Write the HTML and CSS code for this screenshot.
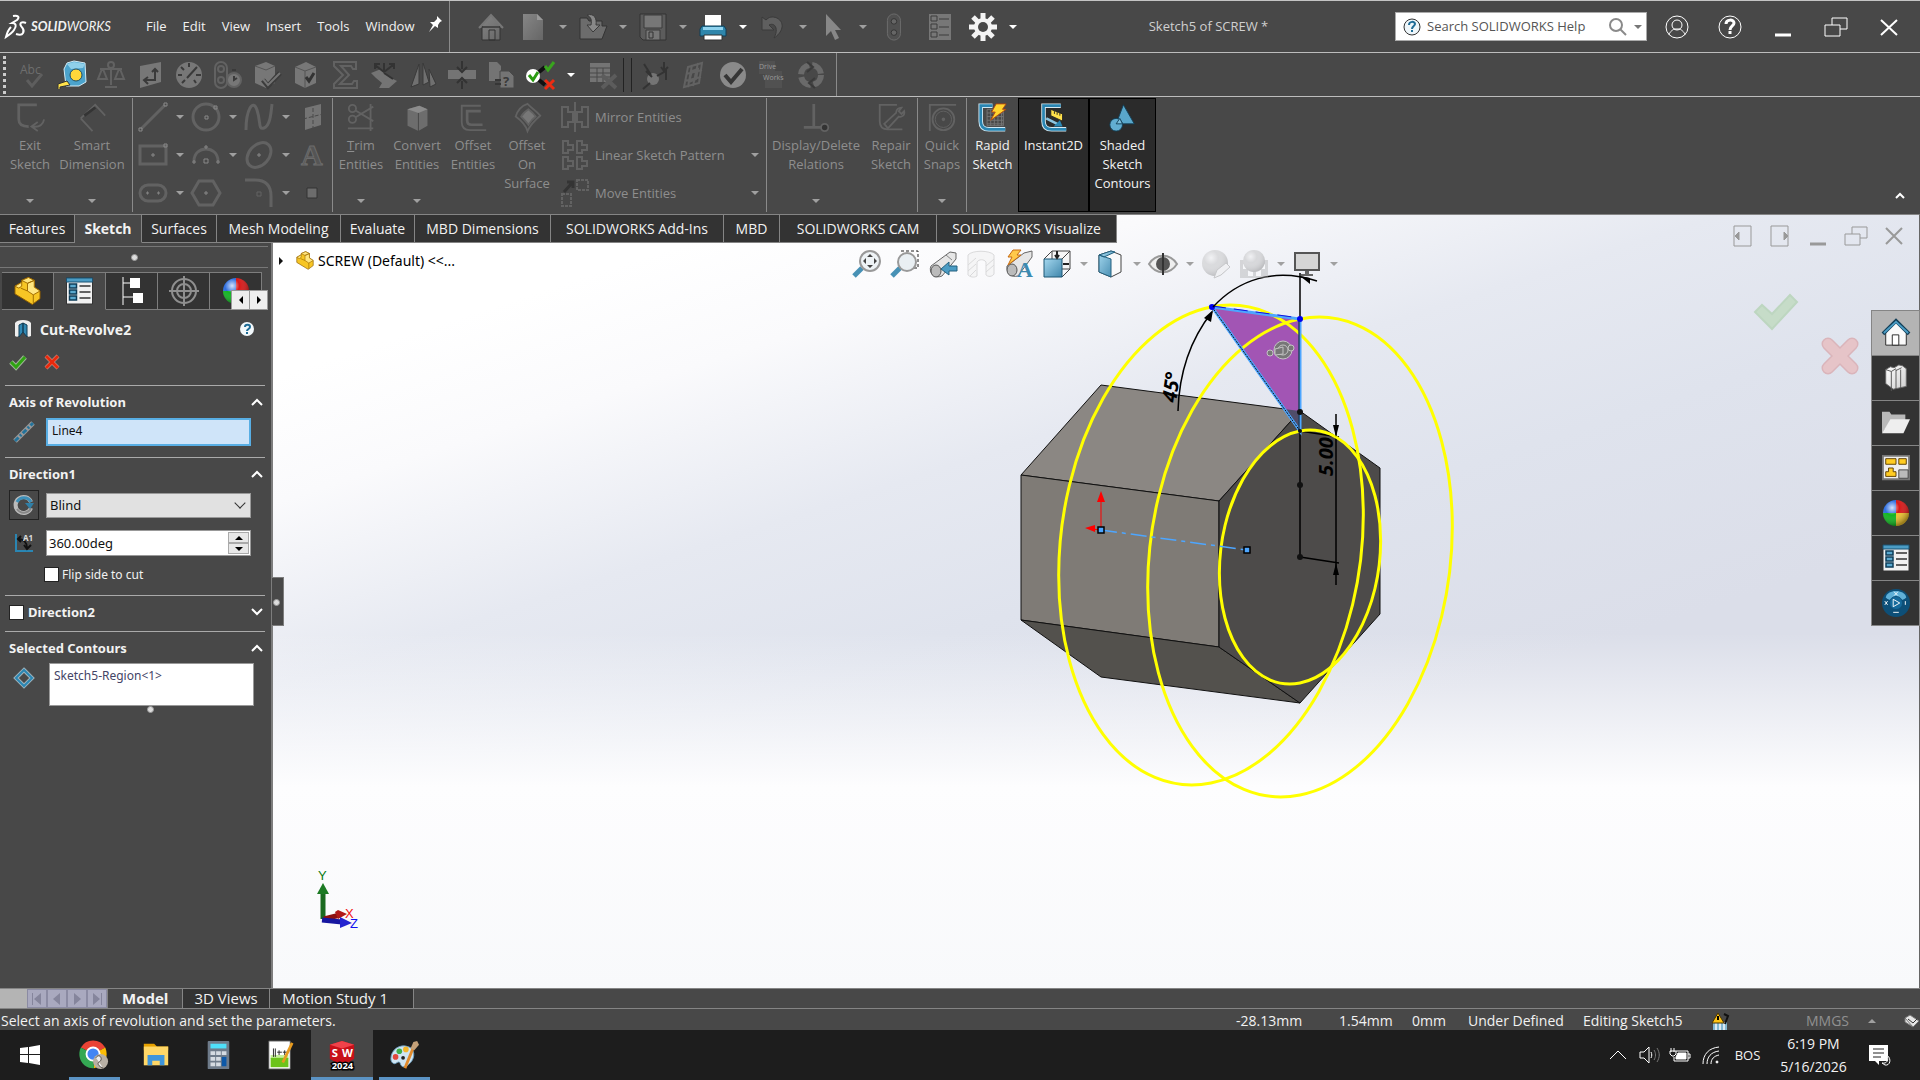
FILE: index.html
```html
<!DOCTYPE html>
<html lang="en">
<head>
  <meta charset="UTF-8" />
  <meta name="viewport" content="width=device-width, initial-scale=1.0" />
  <title>Sketch5 of SCREW *</title>
  <link rel="stylesheet" href="styles.css">
</head>
<body>
  <svg class="defs" aria-hidden="true">
    <defs>
      <linearGradient id="gBlue" x1="0" y1="0" x2="1" y2="1"><stop offset="0" stop-color="#a5d8ef"/><stop offset="1" stop-color="#3f86ab"/></linearGradient>
      <linearGradient id="gWhite" x1="0" y1="0" x2="1" y2="1"><stop offset="0" stop-color="#fff"/><stop offset="1" stop-color="#cfcfcf"/></linearGradient>
      <linearGradient id="gGrey" x1="0" y1="0" x2="1" y2="1"><stop offset="0" stop-color="#868686"/><stop offset="1" stop-color="#666"/></linearGradient>
      <radialGradient id="gShine" cx=".35" cy=".3" r=".7"><stop offset="0" stop-color="#fff" stop-opacity=".8"/><stop offset=".4" stop-color="#fff" stop-opacity="0"/><stop offset="1" stop-color="#000" stop-opacity=".35"/></radialGradient>
      <symbol id="part" viewBox="0 0 28 30">
        <path d="M1 10 8 6V4l7-3 6 3v7l6 4v8l-8 6L1 18z" fill="#f7c625" stroke="#8a5a00"/>
        <path d="M8 4l6 3 7-3-6-3zM14 7v8l6 4 7-4-6-4V4zM1 10l4 2 3-2V6z" fill="#ffe680" stroke="#a06c00"/>
        <path d="M20 19v9M14 15l-7-3" stroke="#a06c00" fill="none"/>
      </symbol>
      <symbol id="props" viewBox="0 0 28 28">
        <path d="M1 1h26v26H1z" fill="#f1f1f1" stroke="#333"/><path d="M1 1h26v4H1z" fill="#4b9cc4" stroke="#1b5273"/>
        <g fill="#5aa9cf" stroke="#0d3c58" stroke-width="1.5"><rect x="4" y="7" width="7" height="4"/><rect x="4" y="13" width="7" height="4"/><rect x="4" y="19" width="7" height="4"/></g>
        <path d="M14 9h11M14 15h11M14 21h11" stroke="#333" stroke-width="1.5"/>
      </symbol>
      <symbol id="ball" viewBox="0 0 28 28">
        <path d="M14 14H1A13 13 0 0 1 14 1z" fill="#2f6fe0"/><path d="M14 14V1a13 13 0 0 1 13 13z" fill="#d81818"/>
        <path d="M14 14H1a13 13 0 0 0 13 13z" fill="#12b422"/><path d="M14 14h13a13 13 0 0 1-13 13z" fill="#edc02c"/>
        <circle cx="14" cy="14" r="13" fill="url(#gShine)"/>
      </symbol>
    </defs>
  </svg>

  <header class="titlebar">
    <div class="brand">
      <svg width="22" height="26" viewBox="0 0 22 26" fill="none" stroke="#fff" stroke-width="2"><path d="M8 2c5-1 7 1 4 4L7 9c4 0 5 3 2 7-2 3-5 5-8 7 1-4 3-8 5-10"/><path d="M21 9c-4-2-7 0-5 3s4 4 2 7c-1 2-4 2-7 1"/></svg>
      <span><b>SOLID</b>WORKS</span>
    </div>
    <nav class="menus">
      <button>File</button><button>Edit</button><button>View</button><button>Insert</button><button>Tools</button><button>Window</button>
    </nav>
    <button class="pin" aria-label="Pin menu"><svg width="14" height="16" viewBox="0 0 14 16"><path d="M9 0l5 5-2 1-2 3v3L7 10l-6 6 4-7-3-3h4l3-3z" fill="#fff"/></svg></button>
    <div class="quick">
      <button class="tb home" aria-label="Home"><svg viewBox="0 0 28 28"><path d="M2 15 14 2l12 13M5 13v14h18V13" fill="url(#gGrey)" stroke="#333"/><path d="M2 15 14 2l12 13" fill="none" stroke="#777" stroke-width="2"/><path d="M12 17h6v10h-6z" fill="none" stroke="#333"/></svg></button>
      <button class="tb" aria-label="New"><svg viewBox="0 0 28 28"><path d="M4 1h14l6 6v20H4z" fill="url(#gGrey)"/><path d="M18 1v6h6" fill="#999"/></svg></button>
      <button class="drop" aria-label="New options"></button>
      <button class="tb" aria-label="Open"><svg viewBox="0 0 28 28"><path d="M1 26V5h7l2 3h13v5h5l-5 13z" fill="#6c6c6c" stroke="#333"/><path d="M8 2c7-2 10 3 9 10h4l-7 7-6-7h4c1-5 0-8-4-10z" fill="#888" stroke="#3a3a3a"/></svg></button>
      <button class="drop" aria-label="Open options"></button>
      <button class="tb" aria-label="Save"><svg viewBox="0 0 28 28"><path d="M1 1h26v26H4l-3-3z" fill="#5c5c5c" stroke="#333"/><path d="M5 2h18v13H5zM7 17h14v10H7z" fill="#777" stroke="#3a3a3a"/><path d="M10 19h4v6h-4z" fill="none" stroke="#333"/></svg></button>
      <button class="drop" aria-label="Save options"></button>
      <button class="tb" aria-label="Print"><svg viewBox="0 0 28 28"><path d="M6 2h16v12H6z" fill="#fff"/><path d="M3 13h22l2 3v7H1v-7z" fill="#2f86ab" stroke="#0f3f58"/><path d="M4 14h20v3H4z" fill="#8fd3ef"/><path d="M5 22h18v5H5z" fill="#fff" stroke="#333"/></svg></button>
      <button class="drop on" aria-label="Print options"></button>
      <button class="tb" aria-label="Undo"><svg viewBox="0 0 28 28"><path d="M3 4v13h12l-5-5c6-3 10 4 5 13 8-5 12-15 3-20-5-2-8-1-11 2z" fill="#5f5f5f" stroke="#3a3a3a"/></svg></button>
      <button class="drop" aria-label="Undo options"></button>
      <button class="tb" aria-label="Select"><svg viewBox="0 0 28 28"><path d="M7 1v22l5-5 4 9 4-2-4-8h6z" fill="#888"/></svg></button>
      <button class="drop" aria-label="Select options"></button>
      <button class="tb rebuild" aria-label="Rebuild"><svg viewBox="0 0 28 30"><rect x="8" y="1" width="14" height="28" rx="7" fill="#505050" stroke="#6e6e6e"/><circle cx="15" cy="9" r="3" fill="#666" stroke="#333"/><circle cx="15" cy="21" r="3" fill="#666" stroke="#333"/></svg></button>
      <button class="tb list" aria-label="File properties"><svg viewBox="0 0 28 28"><path d="M3 1h22v26H3z" fill="#777"/><path d="M5 3h6v5H5zM5 11h6v5H5zM5 19h6v5H5zM13 6h10M13 14h10M13 22h10" fill="none" stroke="#3c3c3c"/></svg></button>
      <button class="tb" aria-label="Options"><svg viewBox="0 0 28 28"><g stroke="#f4f4f4" stroke-width="5"><path d="M14 0v28M0 14h28M4 4l20 20M24 4 4 24"/></g><circle cx="14" cy="14" r="9" fill="#f4f4f4"/><circle cx="14" cy="14" r="5" fill="#484848"/></svg></button>
      <button class="drop on" aria-label="More options"></button>
    </div>
    <h1>Sketch5 of SCREW *</h1>
    <div class="search">
      <svg width="18" height="18" viewBox="0 0 18 18"><circle cx="9" cy="9" r="8" fill="#eef6fa" stroke="#333"/><path d="M6 7c0-4 6-4 6-1 0 2-3 2-3 5M9 12v2" fill="none" stroke="#1f6c96" stroke-width="2"/></svg>
      <input type="text" aria-label="Search help" placeholder="Search SOLIDWORKS Help">
      <svg width="18" height="18" viewBox="0 0 18 18" fill="none" stroke="#8a8a8a" stroke-width="2"><circle cx="7" cy="7" r="6"/><path d="M11 11l6 6"/></svg>
      <button class="drop grey" aria-label="Search options"></button>
    </div>
    <div class="window-buttons">
      <button aria-label="Account"><svg viewBox="0 0 26 26"><circle cx="13" cy="13" r="11"/><circle cx="13" cy="11" r="5"/><path d="M5 21c1-4 4-5 5-6h6c1 1 4 2 5 6"/></svg></button>
      <button aria-label="Help"><svg viewBox="0 0 26 26"><circle cx="13" cy="13" r="11"/><path d="M9 10c0-5 8-5 8-1 0 3-4 3-4 7M13 17v3" stroke-width="3"/></svg></button>
      <button aria-label="Minimize"><svg viewBox="0 0 26 26"><path d="M5 21h16" stroke-width="3"/></svg></button>
      <button aria-label="Restore"><svg viewBox="0 0 26 26"><path d="M2 11h15v11H2zM9 11V4h15v11h-7" /></svg></button>
      <button aria-label="Close"><svg viewBox="0 0 26 26"><path d="M5 6l16 15M21 6 5 21" stroke-width="2"/></svg></button>
    </div>
  </header>

  <div class="toolbar">
    <i class="grip"></i>
    <button aria-label="Spelling"><svg viewBox="0 0 28 28"><text x="1" y="13" font-size="12" fill="#6e6e6e">Abc</text><path d="M8 19l5 6 10-12" fill="none" stroke="#5e5e5e" stroke-width="3"/></svg></button>
    <button aria-label="Measure"><svg viewBox="0 0 28 28"><path d="M9 2l7-2 11 2 1 19-7 4H8L6 8z" fill="#4ba3cc" stroke="#d5ecf6"/><path d="M9 3l7-2 11 2-2 4-12 1z" fill="#8fd0ea"/><circle cx="18" cy="14" r="6" fill="#ffd83a" stroke="#1d4d68"/><path d="M0 28v-5l9-3 3 4-10 2v2" fill="#ffe24a" stroke="#333"/></svg></button>
    <button aria-label="Mass properties"><svg viewBox="0 0 28 28" class="ln"><circle cx="14" cy="4" r="3"/><path d="M14 7v17M3 8h22M5 8 1 18h9L6 8M22 8l-4 10h9L23 8M8 26h12"/></svg></button>
    <button aria-label="Section properties"><svg viewBox="0 0 28 28"><path d="M4 5l21-4v20L4 27z" fill="#777"/><path d="M9 19h10V9M12 16l-4 3 4 4M16 11l3-3 3 3" fill="none" stroke="#3a3a3a" stroke-width="2"/></svg></button>
    <button aria-label="Sensor"><svg viewBox="0 0 28 28"><circle cx="14" cy="14" r="13" fill="#777"/><path d="M12 17 22 6M14 2v4M3 14h4M21 14h5M6 6l3 3M7 22l3-3M21 22l-2-3" stroke="#3a3a3a" stroke-width="2"/></svg></button>
    <button aria-label="Performance evaluation"><svg viewBox="0 0 28 28" class="ln"><rect x="1" y="1" width="12" height="26" rx="6"/><circle cx="7" cy="8" r="3"/><circle cx="7" cy="19" r="3"/><circle cx="20" cy="19" r="7" fill="#777"/><path d="M20 15v4l3-2M18 9h4" stroke="#3a3a3a" stroke-width="2"/></svg></button>
    <button aria-label="Check"><svg viewBox="0 0 28 28"><path d="M2 5l11-4 9 4v17l-9 5-11-5z" fill="#777"/><path d="M2 5l11 4 9-4" fill="none" stroke="#555"/><path d="M10 19l5 6L27 12" fill="none" stroke="#3c3c3c" stroke-width="5"/><path d="M10 18l5 6L27 12" fill="none" stroke="#747474" stroke-width="2"/></svg></button>
    <button aria-label="Import diagnostics"><svg viewBox="0 0 28 28"><path d="M3 6l11-5 10 5v16l-11 5-10-5z" fill="#777"/><path d="M3 6l10 4 11-4M13 10v17" fill="none" stroke="#555"/><path d="M14 16l3 4 5-8" fill="none" stroke="#333" stroke-width="3"/></svg></button>
    <button aria-label="Equations"><svg viewBox="0 0 28 28" class="ln"><path d="M3 1h22v7h-3l-2-3H10l8 9-9 9h12l2-3h3v7H3v-4l9-9-9-9z"/></svg></button>
    <button aria-label="Geometry analysis"><svg viewBox="0 0 28 28"><path d="M1 12l10-4 8 8 8 4-8 7H9l3-5-6-5z" fill="#747474"/><path d="M5 4l9 7 9-7M14 2v9M14 12l9 6M5 8V3h5M19 3h5v5" fill="none" stroke="#333" stroke-width="2"/></svg></button>
    <button aria-label="Draft analysis"><svg viewBox="0 0 28 28"><path d="M2 26 10 3v20zM14 2v22l6-3zM20 8l7 15-6 3z" fill="#707070" stroke="#3a3a3a"/></svg></button>
    <button aria-label="Thickness analysis"><svg viewBox="0 0 28 28"><path d="M0 9h28v9H0z" fill="#747474"/><path d="M14 0v8M9 6l5 5 5-5M14 28v-8M9 22l5-5 5 5" fill="none" stroke="#333" stroke-width="2"/></svg></button>
    <button aria-label="Compare documents"><svg viewBox="0 0 28 28"><path d="M2 1h8l4 4v15H2z" fill="#747474"/><path d="M13 10h9l5 5v12H13z" fill="#747474" stroke="#484848"/><text x="16" y="25" font-size="13" font-weight="bold" fill="#3a3a3a">?</text><path d="M8 19h6M8 23h6" stroke="#363636" stroke-width="2"/></svg></button>
    <button aria-label="Check active document"><svg viewBox="0 0 28 28"><circle cx="7" cy="15" r="7" fill="#fff"/><path d="M3 14l4 5 5-8" fill="none" stroke="#2b9a12" stroke-width="3"/><path d="M13 11l6-5M13 19l6 5" stroke="#111" stroke-width="4"/><path d="M19 5l3 4 6-8" fill="none" stroke="#39a41e" stroke-width="3"/><path d="M19 19l9 9M28 19l-9 9" stroke="#ec2c12" stroke-width="3"/></svg></button>
    <button class="drop on" aria-label="Check options"></button>
    <button aria-label="Design table"><svg viewBox="0 0 28 28"><path d="M1 2h20v19H1z" fill="#747474"/><path d="M1 7h20M1 12h20M1 16h20M8 7v14M14 7v14" stroke="#484848"/><path d="M13 14l14 13M27 14 13 27" stroke="#5c5c5c" stroke-width="4"/></svg></button>
    <i class="rails"></i>
    <button aria-label="Simulation"><svg viewBox="0 0 28 28"><circle cx="12" cy="18" r="6" fill="#747474"/><path d="M3 3l7 11M5 10l6 6M2 28l7-6M16 15l9-5v9M23 1v8M20 6l3 4 4-4" fill="none" stroke="#333" stroke-width="2"/></svg></button>
    <button aria-label="Flow simulation"><svg viewBox="0 0 28 28" class="ln"><path d="M8 6l14-4-3 20-15 4zM12 10l6-2-2 10-7 3zM12 4 8 26M18 2l-5 23M6 13l16-4M5 20l16-4"/></svg></button>
    <button aria-label="Costing"><svg viewBox="0 0 28 28"><circle cx="14" cy="14" r="13" fill="#8a8a8a"/><path d="M6 14l6 7L23 8" fill="none" stroke="#363636" stroke-width="4"/></svg></button>
    <button aria-label="DriveWorks"><svg viewBox="0 0 28 28"><path d="M1 0h16v13H1zM7 10h17v17H7z" fill="#515151"/><text x="1" y="8" font-size="7" fill="#999">Drive</text><text x="5" y="19" font-size="7" fill="#999">Works</text></svg></button>
    <button aria-label="Update"><svg viewBox="0 0 28 28"><circle cx="14" cy="14" r="10" fill="none" stroke="#6a6a6a" stroke-width="6" stroke-dasharray="13 3"/><path d="M10 1l6 5-6 5M18 27l-6-5 6-5" fill="none" stroke="#3a3a3a" stroke-width="2"/></svg></button>
    <i class="end"></i>
  </div>

  <div class="ribbon">
    <div class="group pad">
      <button class="cmd w60 dim"><svg viewBox="0 0 32 32" class="ln"><path d="M23 2H3v16c0 6 4 8 11 8" stroke-width="3"/><path d="M18 26c8 1 12-3 13-8M24 21l-7 5 7 5"/></svg>Exit<br>Sketch<i></i></button>
      <button class="cmd w64 dim"><svg viewBox="0 0 32 32" class="ln"><path d="M3 17 19 2l11 12M3 17l13 14"/><path d="M7 14l12-9" stroke="#343434" stroke-width="3"/></svg>Smart<br>Dimension<i></i></button>
    </div>
    <div class="group shapes">
      <button aria-label="Line"><svg viewBox="0 0 30 30" class="ln"><path d="M3 27 27 3" stroke-width="3"/><path d="M1 26h3v3H1zM26 1h3v3h-3z" stroke="#888" stroke-width="1"/></svg></button><button class="drop" aria-label="Line options"></button>
      <button aria-label="Circle"><svg viewBox="0 0 30 30" class="ln"><circle cx="15" cy="15" r="13" stroke-width="3"/><path d="M14 14h3v3h-3zM23 4h3v3h-3z" stroke="#888" stroke-width="1"/></svg></button><button class="drop" aria-label="Circle options"></button>
      <button aria-label="Spline"><svg viewBox="0 0 30 30" class="ln"><path d="M2 28C2 8 9-4 13 8s1 20 7 18 7-14 8-24" stroke-width="3"/></svg></button><button class="drop" aria-label="Spline options"></button>
      <button aria-label="Plane"><svg viewBox="0 0 30 30"><path d="M8 6l16-4v21L8 28z" fill="#747474"/><path d="M16 0v30M6 17l20-5" stroke="#484848" stroke-dasharray="4 2"/></svg></button>
      <button aria-label="Rectangle"><svg viewBox="0 0 30 30" class="ln"><path d="M2 6h26v18H2z" stroke-width="3"/><path d="M14 14h2v2h-2zM26 4h3v3h-3z" stroke="#888" stroke-width="1"/></svg></button><button class="drop" aria-label="Rectangle options"></button>
      <button aria-label="Arc"><svg viewBox="0 0 30 30" class="ln"><path d="M3 21C3 5 27 5 27 21" stroke-width="3"/><path d="M13 19h4v4h-4zM2 21h2v2H2zM26 21h2v2h-2zM14 6h2v2h-2z" stroke="#888" stroke-width="1"/></svg></button><button class="drop" aria-label="Arc options"></button>
      <button aria-label="Ellipse"><svg viewBox="0 0 30 30" class="ln"><ellipse cx="15" cy="15" rx="14" ry="10" transform="rotate(-48 15 15)" stroke-width="3"/><path d="M14 14h2v2h-2z" stroke="#888" stroke-width="1"/></svg></button><button class="drop" aria-label="Ellipse options"></button>
      <button aria-label="Text"><svg viewBox="0 0 30 30"><text x="4" y="25" font-family="Liberation Serif" font-size="30" font-weight="bold" fill="#555" stroke="#6c6c6c">A</text></svg></button>
      <button aria-label="Slot"><svg viewBox="0 0 30 30" class="ln"><rect x="2" y="7" width="26" height="16" rx="8" stroke-width="3"/><path d="M9 14h1v2H9zM20 14h1v2h-1z" stroke="#888" stroke-width="1"/></svg></button><button class="drop" aria-label="Slot options"></button>
      <button aria-label="Polygon"><svg viewBox="0 0 30 30" class="ln"><path d="M8 3h14l7 12-7 12H8L1 15z" stroke-width="3"/><path d="M14 14h2v2h-2z" stroke="#888" stroke-width="1"/></svg></button><span></span>
      <button aria-label="Fillet"><svg viewBox="0 0 30 30" class="ln"><path d="M1 2h10c11 0 16 6 16 16v11" stroke-width="3"/><path d="M13 14h4v4h-4z" stroke-width="1"/></svg></button><button class="drop" aria-label="Fillet options"></button>
      <button aria-label="Point"><svg viewBox="0 0 30 30"><path d="M10 10h10v10H10z" fill="#6c6c6c" stroke="#333"/></svg></button>
    </div>
    <div class="group">
      <button class="cmd w56 dim"><svg viewBox="0 0 32 32" class="ln"><circle cx="6" cy="6" r="4"/><circle cx="6" cy="18" r="4"/><path d="M9 8l20 12M9 16 29 4M1 28h28M26 1v30"/></svg><span><u>T</u>rim</span>Entities<i></i></button>
      <button class="cmd w56 dim"><svg viewBox="0 0 32 32"><path d="M5 7l13-4 9 4v18l-10 6-12-6z" fill="#6d6d6d"/><path d="M5 7l12 4 10-4-9-4z" fill="#8c8c8c"/><path d="M17 11v20" stroke="#444"/></svg>Convert<br>Entities<i></i></button>
      <button class="cmd w56 dim"><svg viewBox="0 0 32 32" class="ln"><path d="M24 3H3v18c0 6 3 9 9 9h18"/><path d="M24 9H9v10c0 3 2 5 5 5h12" stroke-width="3"/></svg>Offset<br>Entities</button>
      <button class="cmd w52 dim"><svg viewBox="0 0 32 32" class="ln"><path d="M3 15C5 8 10 3 16 1c6 6 10 8 14 13-6 5-11 10-14 17-2-6-6-11-13-16z"/><path d="M9 15c2-4 5-6 8-8 4 3 6 5 8 8-4 3-6 6-8 9-2-3-5-6-8-9z" fill="#777"/></svg>Offset<br>On<br>Surface</button>
      <div class="rows">
        <button class="row"><svg viewBox="0 0 30 30" class="ln"><path d="M2 5h6v5h5v10H8v5H2zM28 5h-6v5h-5v10h5v5h6zM15 0v30"/></svg>Mirror Entities</button>
        <button class="row"><svg viewBox="0 0 30 30" class="ln"><path d="M3 1h5v4h5v5H8v3H3zM17 1h5v4h5v5h-5v3h-5zM3 17h5v4h5v5H8v3H3zM17 17h5v4h5v5h-5v3h-5z"/></svg>Linear Sketch Pattern<i></i></button>
        <button class="row"><svg viewBox="0 0 30 30" class="ln"><path d="M2 16h9v12H2zM17 2h11v10H17z" stroke-dasharray="3 1"/><path d="M4 14l8-9M7 4h6v6" stroke="#343434" stroke-width="3"/></svg>Move Entities<i></i></button>
      </div>
    </div>
    <div class="group">
      <button class="cmd w98 dim"><svg viewBox="0 0 32 32" class="ln"><path d="M13 1v26M2 27h20" stroke-width="3"/><circle cx="25" cy="27" r="4" fill="#333"/></svg>Display/Delete<br>Relations<i></i></button>
      <button class="cmd w52 dim"><svg viewBox="0 0 32 32" class="ln"><path d="M22 2H3v18c0 6 3 9 9 9h16"/><path d="M8 23l13-12c0-4 3-6 6-6l-3 4 3 3 3-3c1 5-3 7-6 6L12 28z"/></svg>Repair<br>Sketch</button>
    </div>
    <div class="group">
      <button class="cmd w48 dim"><svg viewBox="0 0 32 32" class="ln"><path d="M2 31V2h29"/><circle cx="17" cy="18" r="12"/><circle cx="17" cy="18" r="9" stroke-width="1"/><circle cx="17" cy="18" r="1"/></svg>Quick<br>Snaps<i></i></button>
    </div>
    <div class="group open">
      <button class="cmd w51"><svg viewBox="0 0 32 32"><path d="M10 7h18v18H10zM14 7v18M18 7v18M22 7v18M26 7v18M10 11h18M10 15h18M10 19h18M10 23h18" fill="none" stroke="#777"/><path d="M16 3H3v17c0 6 3 9 9 9h18" fill="none" stroke="#cfe8f4" stroke-width="5"/><path d="M16 3H3v17c0 6 3 9 9 9h18" fill="none" stroke="#2a86b3" stroke-width="3"/><path d="M20 1h11l-4 6h4L14 19l5-9h-4z" fill="#ffd52e" stroke="#b4470b"/></svg>Rapid<br>Sketch</button>
      <button class="cmd w71 active"><svg viewBox="0 0 32 32"><path d="M24 3H5v17c0 6 3 9 9 9h16" fill="none" stroke="#d9e9f0" stroke-width="5"/><path d="M24 3H5v17c0 6 3 9 9 9h16" fill="none" stroke="#2a86b3" stroke-width="3"/><path d="M13 7l13 5v8l-13-6z" fill="#ffe14a" stroke="#222"/><path d="M17 9v3M20 10v3M23 11v3" stroke="#222"/><path d="M8 17l12 6" stroke="#8cc6e2" stroke-width="3"/><path d="M16 26h10l-3-7z" fill="#2a86b3"/></svg>Instant2D</button>
      <button class="cmd w67 active"><svg viewBox="0 0 32 32"><path d="M17 2l12 21H9z" fill="#59a7cb" stroke="#123e55"/><circle cx="9" cy="24" r="7" fill="#62aed1" stroke="#123e55"/><path d="M13 17l3 6H9z" fill="#7cc0de" stroke="#123e55"/></svg>Shaded<br>Sketch<br>Contours</button>
    </div>
    <button class="collapse" aria-label="Collapse ribbon"><svg width="10" height="8" viewBox="0 0 10 8" fill="none" stroke="#fff" stroke-width="2"><path d="M1 6l4-4 4 4"/></svg></button>
  </div>

  <main class="workspace">
    <nav class="tabs">
      <button>Features</button><button class="current">Sketch</button><button>Surfaces</button><button>Mesh Modeling</button><button>Evaluate</button><button>MBD Dimensions</button><button>SOLIDWORKS Add-Ins</button><button>MBD</button><button>SOLIDWORKS CAM</button><button>SOLIDWORKS Visualize</button>
    </nav>

    <aside class="panel">
      <div class="panel-grip"><i class="knob"></i></div>
      <div class="panel-tabs">
        <button aria-label="Feature tree"><svg width="27" height="30"><use href="#part"/></svg></button>
        <button class="current" aria-label="Property manager"><svg width="29" height="28"><use href="#props"/></svg></button>
        <button aria-label="Configurations"><svg width="24" height="28" viewBox="0 0 24 28"><path d="M3 0v28M3 6h8M3 20h10" stroke="#fff" fill="none"/><path d="M10 1h10v10H10zM13 16h10v10H13z" fill="#fff"/></svg></button>
        <button aria-label="DimXpert"><svg width="30" height="30" viewBox="0 0 30 30" fill="none" stroke="#8f8f8f" stroke-width="2"><circle cx="15" cy="15" r="12"/><circle cx="15" cy="15" r="7"/><path d="M15 0v30M0 15h30"/></svg></button>
        <button aria-label="Display manager"><svg width="28" height="28"><use href="#ball"/></svg></button>
        <div class="scroller"><button aria-label="Scroll left"></button><button class="right" aria-label="Scroll right"></button></div>
      </div>

      <div class="feature">
        <svg width="18" height="18" viewBox="0 0 18 18"><path d="M1 3c2-4 14-4 16 0v13c-2 1-3 1-4 0V8L9 4 5 8v8c-1 1-3 1-4 0z" fill="#eee"/><path d="M5 5l4-2v9l-4 5zM9 3l4 2v12l-4-5z" fill="#3188b3" stroke="#123c54"/></svg>
        <h2>Cut-Revolve2</h2>
        <button aria-label="Help"><svg width="14" height="14" viewBox="0 0 14 14"><circle cx="7" cy="7" r="7" fill="#f2f8fb"/><path d="M5 5c0-3 5-3 5 0 0 2-3 2-3 4M7 10v2" fill="none" stroke="#1f6c96" stroke-width="2"/></svg></button>
      </div>
      <div class="confirm">
        <button aria-label="OK"><svg width="16" height="14" viewBox="0 0 16 14" fill="none"><path d="M1 7l5 5L15 2" stroke="#9fb597" stroke-width="5"/><path d="M1 7l5 5L15 2" stroke="#2fa312" stroke-width="3"/></svg></button>
        <button aria-label="Cancel"><svg width="14" height="14" viewBox="0 0 14 14"><path d="M1 1l12 12M13 1 1 13" stroke="#c99a92" stroke-width="4"/><path d="M1 1l12 12M13 1 1 13" stroke="#e8290c" stroke-width="3"/></svg></button>
      </div>

      <section class="axis">
        <header><h3><label for="axis">Axis of Revolution</label></h3><svg class="caret" viewBox="0 0 12 8"><path d="M1 7l5-5 5 5"/></svg></header>
        <div class="field">
          <span class="glyph"><svg width="20" height="20" viewBox="0 0 20 20"><path d="M1 19 19 1" stroke="#999" stroke-width="5"/><path d="M1 19 19 1" stroke="#23739b" stroke-width="3" stroke-dasharray="5 2 2 2"/></svg></span>
          <input id="axis" class="picked" type="text" value="Line4">
        </div>
      </section>

      <section class="dir1">
        <header><h3>Direction1</h3><svg class="caret" viewBox="0 0 12 8"><path d="M1 7l5-5 5 5"/></svg></header>
        <div class="field combo">
          <button class="glyph boxed" aria-label="Reverse direction"><svg width="20" height="20" viewBox="0 0 20 20" fill="none"><path d="M17 13a8 8 0 1 1 0-6" stroke="#bbb" stroke-width="4"/><path d="M17 13a8 8 0 0 1-14 1" stroke="#888" stroke-width="2"/><path d="M3 7a8 8 0 0 1 14 0" stroke="#3d8fb8" stroke-width="3"/><path d="M11 8h9l-4 6z" fill="#2f7fa7"/></svg></button>
          <select aria-label="End condition"><option>Blind</option></select>
        </div>
        <div class="field angle">
          <span class="glyph"><svg width="20" height="20" viewBox="0 0 20 20"><path d="M2 1v17h17" stroke="#2a86b3" stroke-width="2" fill="none"/><path d="M4 6c6 0 9 4 9 9M7 3L4 6l3 3M10 12l3 4 4-4" stroke="#111" fill="none" stroke-width="2"/><text x="9" y="8" font-size="8" font-weight="bold" fill="#ddd">A1</text></svg></span>
          <div class="spin"><input type="text" aria-label="Angle" value="360.00deg"><div><button aria-label="Increase"></button><button class="down" aria-label="Decrease"></button></div></div>
        </div>
        <label class="check flip"><input type="checkbox">Flip side to cut</label>
      </section>

      <section class="dir2">
        <header><label class="check"><input type="checkbox"><b>Direction2</b></label><svg class="caret" viewBox="0 0 12 8"><path d="M1 1l5 5 5-5"/></svg></header>
      </section>

      <section class="contours">
        <header><h3><label for="contours">Selected Contours</label></h3><svg class="caret" viewBox="0 0 12 8"><path d="M1 7l5-5 5 5"/></svg></header>
        <div class="field">
          <span class="glyph"><svg width="20" height="20" viewBox="0 0 20 20" fill="none"><path d="M10 2l8 8-8 8-8-8z" stroke="#9db3bd" stroke-width="4"/><path d="M10 2l8 8-8 8-8-8z" stroke="#2a86b3" stroke-width="2"/></svg></span>
          <textarea id="contours" readonly>Sketch5-Region&lt;1&gt;</textarea>
        </div>
        <i class="knob"></i>
      </section>
      <i class="handle"><i class="knob"></i></i>
    </aside>

    <div class="canvas">
      <svg class="scene" viewBox="273 243 1646 745" preserveAspectRatio="xMidYMid meet">
        <!-- hex body -->
        <g stroke="#111" stroke-linejoin="round">
          <path d="M1101 385 1300 411 1219 501 1021 475z" fill="#8b8783"/>
          <path d="M1021 475 1219 501V647L1021 620z" fill="#7f7b76"/>
          <path d="M1021 620 1219 647 1300 703 1101 677z" fill="#53514d"/>
          <path d="M1300 411 1380 468V614L1300 703 1219 647V501z" fill="#4d4b4a"/>
        </g>
        <!-- cut profile -->
        <path d="M1212 307 1300 319V431z" fill="#a255b4"/>
        <path d="M1284 409l16 2v20z" fill="#504d69"/>
        <path d="M1300 273V557M1300 557l39 6M1300 431l39 6M1336 414V585" stroke="#000" stroke-width="1.5"/>
        <!-- swept edges -->
        <g fill="none" stroke="#ff0" stroke-width="3">
          <circle r="238" transform="matrix(.64 -.127 0 1 1211 545)" vector-effect="non-scaling-stroke"/>
          <circle r="238" transform="matrix(.64 -.127 0 1 1300 557)" vector-effect="non-scaling-stroke"/>
          <circle r="126" transform="matrix(.64 -.127 0 1 1300 557)" vector-effect="non-scaling-stroke"/>
        </g>
        <path d="M1212 307 1300 319V431z" fill="none" stroke="#4da6ff" stroke-width="3"/>
        <path d="M1212 307 1300 431" stroke="#111" stroke-dasharray="2 1"/>
        <path d="M1212 306l88 12" stroke="#11d" stroke-dasharray="14 8"/>
        <path d="M1299 319v112" stroke="#111"/>
        <g fill="#00e"><circle cx="1212" cy="307" r="3"/><circle cx="1300" cy="319" r="3"/></g>
        <g fill="#111"><circle cx="1300" cy="412" r="3"/><circle cx="1300" cy="431" r="2"/><circle cx="1300" cy="485" r="3"/><circle cx="1300" cy="557" r="3"/></g>
        <g fill="#777" stroke="#c4c4c4"><circle cx="1283" cy="350" r="9"/><circle cx="1291" cy="348" r="3"/><circle cx="1283" cy="350" r="5"/><path d="M1275 349l8-2v7l-8 1z"/><circle cx="1270" cy="353" r="3"/></g>
        <!-- dimensions -->
        <path d="M1178 411C1179 375 1190 340 1212 312M1213 307C1238 280 1274 267 1317 281" fill="none" stroke="#000" stroke-width="1.5"/>
        <path d="M1213 310l-2 12-7-4zM1300 276l10 8v-6zM1336 437l-3-12h6zM1336 563l-3 12h6z"/>
        <text class="dim-text" transform="translate(1176 403) rotate(-82)">45°</text>
        <text class="dim-text" transform="translate(1333 476) rotate(-90)">5.00</text>
        <!-- origin and axis -->
        <path d="M1101 530V500M1101 530l-10-1" stroke="red"/>
        <path d="M1101 491l-4 11h8zM1085 528l10-3v7z" fill="red"/>
        <path d="M1101 530l146 20" stroke="#4da6ff" stroke-width="1.5" stroke-dasharray="16 5 4 5"/>
        <g fill="#4da6ff" stroke="#000" stroke-width="1.5"><path d="M1098 527h6v6h-6zM1244 547h6v6h-6z"/></g>
        <!-- triad -->
        <path d="M323 919V893" stroke="#1a6a20" stroke-width="5"/><path d="M323 883l-6 11h12z" fill="#1c7a24"/>
        <path d="M324 919l16-4" stroke="#8d1010" stroke-width="5"/><path d="M335 912l3-2 9 4-9 5z" fill="#b01818"/>
        <path d="M322 920l20 2" stroke="#1616a0" stroke-width="5"/><path d="M340 917l12 6-12 5z" fill="#2424d0"/>
        <g class="axis-text"><text x="318" y="880" fill="#0a7a14">Y</text><text x="345" y="918" fill="#f01010">X</text><text x="350" y="928" fill="#1010f0">Z</text></g>
      </svg>

      <div class="tree-node">
        <button aria-label="Expand tree"></button>
        <svg width="18" height="19"><use href="#part"/></svg>
        <span>SCREW (Default) &lt;&lt;...</span>
      </div>

      <div class="hud">
        <button aria-label="Zoom to fit"><svg viewBox="0 0 28 28"><path d="M1 26l8-8" stroke="#4791b5" stroke-width="5"/><circle cx="17" cy="11" r="10" fill="#eef3f6" stroke="#999" stroke-width="2"/><path d="M17 4l3 3h-6zM17 18l3-3h-6zM10 11l3-3v6zM24 11l-3-3v6z" fill="#444"/></svg></button>
        <button aria-label="Zoom to area"><svg viewBox="0 0 28 28"><path d="M1 26l8-8" stroke="#4791b5" stroke-width="5"/><path d="M10 1h17v17h-5" fill="none" stroke="#222" stroke-dasharray="3 2"/><circle cx="16" cy="12" r="9" fill="#e9eff3" stroke="#999" stroke-width="2"/></svg></button>
        <button aria-label="Previous view"><svg viewBox="0 0 28 28"><path d="M2 16 21 2l6 1v6L13 26c-7 3-14-3-11-10z" fill="#e6e6e6" stroke="#666"/><path d="M17 5l6 5" stroke="#888"/><ellipse cx="7" cy="21" rx="5" ry="6" fill="#bbb" stroke="#555"/><path d="M28 16h-8v-4l-8 7 8 6v-4h8z" fill="#4b9cc4" stroke="#24617f"/></svg></button>
        <button class="faint" aria-label="Section view"><svg viewBox="0 0 28 28"><path d="M1 5c4-5 22-5 26 0v19c-2 3-6 3-8 1V12c-2-3-7-3-9 0v14c-3 2-7 1-9-1z" fill="#eee" stroke="#aaa"/><path d="M1 15l8-7M1 21l8-7M3 26l6-6M19 16l8-7M19 22l8-7" stroke="#aaa"/></svg></button>
        <button aria-label="Dynamic annotation views"><svg viewBox="0 0 28 28"><path d="M2 16 19 3l8-2v6L13 26c-7 2-12-4-11-10z" fill="#e6e6e6" stroke="#666"/><ellipse cx="7" cy="20" rx="5" ry="6" fill="#bbb" stroke="#555"/><path d="M8 0h8l-4 5h4L3 15l4-8H3z" fill="#ffc94a" stroke="#c76a12"/><text x="12" y="27" font-family="Liberation Serif" font-size="22" font-weight="bold" fill="#3d8ab0">A</text></svg></button>
        <button aria-label="View orientation"><svg viewBox="0 0 28 28"><path d="M9 1h18v18H9zM1 9l8-8M19 9l8-8M19 27l8-8" fill="#f5f5f5" stroke="#444"/><path d="M1 9h18v18H1z" fill="url(#gBlue)" stroke="#1d5674"/><path d="M14 1v6M26 14h-6M12 5l2 3 2-3" stroke="#222" stroke-width="2" fill="none"/></svg></button>
        <button class="drop" aria-label="Orientation options"></button>
        <button aria-label="Display style"><svg viewBox="0 0 28 28"><path d="M3 5l12-4 10 4v17l-10 5-12-5z" fill="#fafafa" stroke="#444"/><path d="M3 5l12 4v18L3 22zM3 5l12-4 4 1L8 7z" fill="url(#gBlue)" stroke="#24617f"/></svg></button>
        <button class="drop" aria-label="Display options"></button>
        <button aria-label="Hide or show"><svg viewBox="0 0 28 28"><path d="M0 14C7 3 21 3 28 14 21 25 7 25 0 14z" fill="#eee" stroke="#999" stroke-width="2"/><circle cx="14" cy="14" r="7" fill="#555"/><path d="M14 3v22" stroke="#333" stroke-width="2"/></svg></button>
        <button class="drop" aria-label="Visibility options"></button>
        <button class="faint" aria-label="Edit appearance"><svg viewBox="0 0 28 28"><circle cx="13" cy="13" r="13" fill="#b5b5b5"/><circle cx="13" cy="13" r="13" fill="url(#gShine)"/><path d="M12 28l3-8 9-7 4 4-9 8z" fill="#eee" stroke="#888"/></svg></button>
        <button class="faint" aria-label="Apply scene"><svg viewBox="0 0 28 28"><path d="M0 10h28v18H0z" fill="#aaa"/><path d="M3 14h5v5H3zM20 14h5v5h-5zM8 20h5v6H8zM16 20h5v6h-5z" fill="#fff"/><circle cx="14" cy="11" r="11" fill="#b0b0b0"/><circle cx="14" cy="11" r="11" fill="url(#gShine)"/></svg></button>
        <button class="drop" aria-label="Scene options"></button>
        <button aria-label="View settings"><svg viewBox="0 0 28 28"><path d="M2 3h24v17H2z" fill="#d5d5d5" stroke="#555" stroke-width="2"/><path d="M12 21h4v3h4v2H8v-2h4z" fill="#666"/></svg></button>
        <button class="drop" aria-label="View options"></button>
      </div>

      <div class="corner">
        <div class="doc-buttons">
          <button aria-label="Dock left"><svg viewBox="0 0 26 26"><path d="M5 3h17v20H5z"/><path d="M6 13l4-4v8z" fill="#999"/></svg></button>
          <button aria-label="Dock right"><svg viewBox="0 0 26 26"><path d="M4 3h17v20H4z"/><path d="M21 13l-4-4v8z" fill="#999"/></svg></button>
          <button aria-label="Minimize document"><svg viewBox="0 0 26 26"><path d="M5 21h16" stroke-width="3"/></svg></button>
          <button aria-label="Restore document"><svg viewBox="0 0 26 26"><path d="M2 11h15v11H2zM9 11V4h15v11h-7"/></svg></button>
          <button aria-label="Close document"><svg viewBox="0 0 26 26"><path d="M5 5l16 16M21 5 5 21" stroke-width="2"/></svg></button>
        </div>
        <button class="accept" aria-label="Accept"><svg width="44" height="36" viewBox="0 0 44 36"><path d="M1 18l7-7 10 9L36 1l7 7-25 27z" fill="#c6dcc8" stroke="#bdd6c0" stroke-width="2"/></svg></button>
        <button class="reject" aria-label="Reject"><svg width="38" height="38" viewBox="0 0 38 38"><path d="M7 7l24 24M31 7 7 31" stroke="#dab4ba" stroke-width="13" stroke-linecap="round"/><path d="M7 7l24 24M31 7 7 31" stroke="#e6c4c8" stroke-width="10" stroke-linecap="round"/></svg></button>
      </div>

      <nav class="taskpane">
        <button class="current" aria-label="Resources"><svg viewBox="0 0 30 30"><path d="M4 13v15h22V13L15 4z" fill="#fafafa" stroke="#222"/><path d="M1 16 15 2l14 14" fill="none" stroke="#123f58" stroke-width="4"/><path d="M2 15 15 3l13 12" fill="none" stroke="#4b9cc4" stroke-width="2"/><path d="M11 17h7v11h-7z" fill="#fff" stroke="#222"/></svg></button>
        <button aria-label="Design library"><svg viewBox="0 0 30 30"><path d="M4 6l5-3 4 1 5-3 4 1 4 3v19l-14 3-8-6z" fill="url(#gWhite)" stroke="#666"/><path d="M10 8v21M15 6v21M20 6v20M4 6l6 2 5-3M15 7l6-3" stroke="#555" fill="none"/></svg></button>
        <button aria-label="File explorer"><svg viewBox="0 0 30 30"><path d="M0 3h8l2 3h15v7H9L0 26z" fill="#b9b9b9"/><path d="M9 11h21l-7 15H0z" fill="#eee"/></svg></button>
        <button aria-label="View palette"><svg viewBox="0 0 30 30"><path d="M1 2h28v25H1z" fill="#eee" stroke="#777" stroke-width="2"/><path d="M4 5h11v6H4zM18 5h8v6h-8zM4 24v-5h3v-4h5v4h3v5z" fill="#fc2" stroke="#5a3c00"/><path d="M18 17h10v9H18z" fill="#bbb" stroke="#444"/></svg></button>
        <button aria-label="Appearances"><svg viewBox="0 0 28 28"><use href="#ball"/></svg></button>
        <button aria-label="Custom properties"><svg viewBox="0 0 28 28"><use href="#props"/></svg></button>
        <button aria-label="3DEXPERIENCE"><svg viewBox="0 0 30 30"><circle cx="15" cy="15" r="15" fill="#0d4f78"/><path d="M4 9c2-9 20-9 22 0-4 5-18 5-22 0z" fill="#5fb0d8"/><circle cx="15" cy="15" r="7" fill="#156a9c" stroke="#0d4f78"/><path d="M12 11l7 4-7 4zM3 13l3 4M6 13l-3 4M25 13v4M12 25h6M13 3l4 4M17 3l-4 4" stroke="#fff" fill="none"/></svg></button>
      </nav>
    </div>
  </main>

  <div class="sheet-tabs">
    <div class="sheet-nav"><i></i>
      <button aria-label="First"><svg viewBox="0 0 16 16"><path d="M3 2v12h1V2zM12 2v12L5 8z"/></svg></button>
      <button aria-label="Previous"><svg viewBox="0 0 16 16"><path d="M11 2v12L4 8z"/></svg></button>
      <button aria-label="Next"><svg viewBox="0 0 16 16"><path d="M5 2v12l7-6z"/></svg></button>
      <button aria-label="Last"><svg viewBox="0 0 16 16"><path d="M12 2v12h1V2zM4 2v12l7-6z"/></svg></button>
    </div>
    <button class="current">Model</button><button>3D Views</button><button>Motion Study 1</button>
  </div>

  <footer class="status">
    <p>Select an axis of revolution and set the parameters.</p>
    <span class="x">-28.13mm</span><span class="y">1.54mm</span><span class="z">0mm</span><span class="state">Under Defined</span><span class="mode">Editing Sketch5</span>
    <svg class="warn" width="18" height="18" viewBox="0 0 18 18"><path d="M2 10h14v8H2z" fill="#dceaf2"/><path d="M3 10v8M7 10v8M11 10v8M15 10v8" stroke="#2a86b3"/><path d="M7 1l6 10H1z" fill="#ffc414" stroke="#4a3500"/><path d="M7 4v4" stroke="#000" stroke-width="2"/><path d="M13 2l4 2-3 8" stroke="#111" fill="none" stroke-width="2"/></svg>
    <span class="units">MMGS</span><i class="up"></i>
    <svg class="tag" width="16" height="14" viewBox="0 0 16 14"><path d="M1 4l5-3 9 6-6 6zM1 4v4l8 5" fill="#e6e6e6" stroke="#777"/><path d="M4 5l5 4 4-4" fill="none" stroke="#333"/></svg>
  </footer>

  <footer class="taskbar">
    <button class="start" aria-label="Start"><svg width="20" height="20" viewBox="0 0 20 20" fill="#fff"><path d="M0 3l8-1v7H0zM9 2l11-2v9H9zM0 10h8v8l-8-1zM9 10h11v10L9 18z"/></svg></button>
    <button class="run" aria-label="Chrome"><svg viewBox="0 0 32 32"><path d="M15 15 2 8A15 15 0 0 1 28 8z" fill="#ea4335"/><path d="M15 15 28 8c4 9 0 20-12 22z" fill="#fbbc05"/><path d="M15 15l1 15C4 31-3 18 2 8z" fill="#34a853"/><circle cx="15" cy="15" r="7" fill="#4285f4" stroke="#fff" stroke-width="2"/><circle cx="23" cy="23" r="8" fill="#b7afa4"/><path d="M18 19c4-6 8 2 4 4s0 6 4 7" fill="#eee" stroke="#4c463e"/></svg></button>
    <button aria-label="File Explorer"><svg viewBox="0 0 32 32"><path d="M3 4h11l3 3h12v4H3z" fill="#e6a100"/><path d="M3 7h26v20H3z" fill="#ffd767"/><path d="M7 27V16h18v11h-5v-5h-8v5z" fill="#3f95db"/></svg></button>
    <button aria-label="Calculator"><svg viewBox="0 0 32 32"><rect x="5" y="1" width="23" height="30" rx="1" fill="#6e7b8a"/><path d="M8 4h17v5H8z" fill="#4fe0fa"/><g fill="#d5dbe2"><path d="M8 12h5v4H8zM14 12h5v4h-5zM20 12h5v4h-5zM8 18h5v4H8zM14 18h5v4h-5zM8 24h5v4H8zM14 24h5v4h-5z"/></g><path d="M20 18h5v10h-5z" fill="#0c58a8"/></svg></button>
    <button aria-label="Notepad++"><svg viewBox="0 0 32 32"><path d="M4 1h23v30H4z" fill="#fff" stroke="#4b4b4b"/><path d="M6 16h19v4H6z" fill="#c6ef9a"/><path d="M6 19h19v10H6z" fill="#6cc31a"/><path d="M9 9v9M11 9v9M13 13h5M19 13h5M15 11v5M21 11v5" stroke="#222"/><path d="M29 3 19 24" stroke="#e79b1f" stroke-width="3"/></svg></button>
    <button class="run focus" aria-label="SOLIDWORKS 2024"><svg viewBox="0 0 32 32"><path d="M3 5l13-4 13 4v15l-13 8-13-8z" fill="#c81019"/><path d="M3 5l13 4 13-4-13-4z" fill="#f0424a"/><text x="5" y="18" font-size="12" font-weight="bold" fill="#fff">S</text><text x="16" y="18" font-size="12" font-weight="bold" fill="#fff">W</text><text x="5" y="31" font-size="10" font-weight="bold" fill="#fff" stroke="#000" stroke-width="3" paint-order="stroke">2024</text></svg></button>
    <button class="run" aria-label="Paint"><svg viewBox="0 0 32 32"><path d="M2 20C2 10 12 4 20 7c8 2 8 12 3 17-6 7-10 5-11 1-1-3-3-1-5 0s-5-1-5-5z" fill="#cfe5f3" stroke="#6b9fc0"/><circle cx="7" cy="18" r="3" fill="#e1473d"/><circle cx="11" cy="12" r="3" fill="#3fae4b"/><circle cx="18" cy="10" r="3" fill="#f4b52a"/><circle cx="15" cy="19" r="2" fill="#222"/><path d="M26 8 17 30" stroke="#e08a2d" stroke-width="3"/><path d="M23 9l3-7 4-1 2 4-5 6z" fill="#c3a078"/></svg></button>
    <div class="tray">
      <button aria-label="Hidden icons"><svg viewBox="0 0 24 24"><path d="M4 16l8-8 8 8"/></svg></button>
      <button aria-label="Volume"><svg viewBox="0 0 24 24"><path d="M3 9h4l5-5v16l-5-5H3zM14 9c1 2 1 4 0 6"/><path d="M17 7c2 3 2 7 0 10M20 5c3 5 3 9 0 14" stroke="#777"/></svg></button>
      <button aria-label="Battery"><svg viewBox="0 0 24 24"><path d="M8 8h12v10H6v-4M20 11h2v4h-2M3 5v4M6 5v4M2 8h6v3l-2 2H4l-2-2z"/><path d="M10 10h8v6H8v-2z" fill="#fff"/></svg></button>
      <button aria-label="Network"><svg viewBox="0 0 24 24"><path d="M4 21C4 11 10 5 20 4M8 21c0-7 4-12 12-13M12 21c0-5 3-8 8-9"/><circle cx="18" cy="19" r="1" fill="#fff"/></svg></button>
      <button class="lang">BOS</button>
      <button class="clock">6:19 PM<br>5/16/2026</button>
      <button class="notes" aria-label="Notifications"><svg viewBox="0 0 24 24"><path d="M2 2h19v16h-9v4l-4-4H2z" fill="#fff" stroke="none"/><path d="M6 6h11M6 10h11M6 14h8" stroke="#222"/><path d="M15 20c5 1 7-3 5-8 5 4 3 11-2 10z" fill="#222"/></svg></button>
    </div>
  </footer>
</body>
</html>
```
FILE: styles.css
```css
* {
  box-sizing: border-box;
}
body {
  margin: 0;
  min-height: 100vh;
  display: flex;
  flex-direction: column;
  background: #484848;
  color: #f2f2f2;
  font-family: "Open Sans", "Noto Sans", sans-serif;
  font-size: 13px;
  line-height: 19px;
}
button {
  padding: 0;
  border: 0;
  background: none;
  color: inherit;
  font: inherit;
}
h1, h2, h3, p {
  margin: 0;
  font-size: inherit;
}
svg {
  flex: none;
  overflow: visible;
}
.defs {
  position: absolute;
  width: 0;
  height: 0;
}
.ln {
  fill: none;
  stroke: #626262;
  stroke-width: 2;
}

/* small triangle used by every drop-down arrow */
.drop {
  display: flex;
  align-items: center;
  justify-content: center;
}
.drop::before, .cmd i, .row i, .up {
  content: "";
  border: 4px solid transparent;
  border-top-color: #a0a0a0;
  border-bottom: 0;
}
.drop.on::before {
  border-top-color: #fff;
}
.drop.grey::before {
  border-top-color: #777;
}

/* title bar */
.titlebar {
  display: flex;
  align-items: center;
  height: 53px;
  border-top: 1px solid #c4c4c4;
  border-bottom: 1px solid #bdbdbd;
}
.brand {
  display: flex;
  align-items: center;
  gap: 4px;
  width: 138px;
  padding-left: 5px;
  font-size: 13px;
  font-style: italic;
  font-family: Lato, sans-serif;
}
.menus {
  display: flex;
  gap: 16px;
  padding-left: 8px;
  width: 284px;
}
.pin {
  width: 28px;
  height: 51px;
  padding-left: 6px;
  text-align: left;
  border-right: 1px solid #8a8a8a;
}
.quick {
  display: flex;
  align-items: center;
  padding-left: 26px;
}
.tb, .quick .drop {
  width: 30px;
  height: 30px;
}
.tb svg {
  display: block;
  width: 28px;
  height: 28px;
  margin: auto;
}
.home {
  margin-right: 12px;
}
.rebuild {
  margin-right: 17px;
}
.list {
  margin-right: 13px;
}
.titlebar h1 {
  flex: 1;
  text-align: center;
  font-weight: normal;
  color: #d0d0d0;
  padding-right: 6px;
}
.search {
  display: flex;
  align-items: center;
  gap: 6px;
  width: 252px;
  height: 29px;
  margin-right: 17px;
  padding: 0 3px 0 7px;
  background: #fff;
  border: 1px solid #aaa;
}
.search input {
  flex: 1;
  min-width: 0;
  border: 0;
  padding: 0;
  font: inherit;
  font-size: 13px;
}
.search input::placeholder {
  color: #555;
}
.search .drop {
  width: 10px;
}
.window-buttons {
  display: flex;
  gap: 27px;
  padding-right: 18px;
}
.window-buttons svg, .doc-buttons svg {
  display: block;
  width: 26px;
  height: 26px;
  fill: none;
  stroke: #fff;
  stroke-width: 1;
}

/* evaluate toolbar */
.toolbar {
  display: flex;
  align-items: center;
  height: 44px;
  border-bottom: 1px solid #bdbdbd;
}
.toolbar button {
  width: 39px;
}
.toolbar svg {
  display: block;
  width: 28px;
  height: 28px;
  margin: auto;
}
.toolbar .drop {
  width: 24px;
}
.grip {
  width: 3px;
  height: 38px;
  margin: 0 7px 0 3px;
  border-left: 3px dotted #ccc;
}
.rails {
  width: 9px;
  height: 34px;
  margin: 0 3px 0 1px;
  border: 1px solid #222;
  border-width: 0 1px;
}
.end {
  width: 7px;
  align-self: stretch;
  border-right: 1px solid #8a8a8a;
}

/* ribbon */
.ribbon {
  display: flex;
  height: 117px;
  padding-top: 1px;
}
.group {
  display: flex;
  height: 114px;
  border-right: 1px solid #8a8a8a;
}
.group.open {
  border: 0;
}
.pad {
  padding-right: 8px;
}
.cmd {
  position: relative;
  display: flex;
  flex-direction: column;
  align-items: center;
  padding-top: 5px;
  white-space: nowrap;
}
.cmd svg {
  width: 29px;
  height: 29px;
  margin-bottom: 4px;
}
.cmd i {
  position: absolute;
  bottom: 9px;
}
.dim, .row {
  color: #8e8e8e;
}
.w48 { width: 48px; }
.w51 { width: 51px; }
.w52 { width: 52px; }
.w56 { width: 56px; }
.w60 { width: 60px; }
.w64 { width: 64px; }
.w67 { width: 67px; }
.w71 { width: 71px; }
.w98 { width: 98px; }
.active {
  background: #2b2b2b;
  border: 1px solid #000;
  padding-top: 4px;
}
.shapes {
  display: grid;
  grid-template-columns: 30px 23px 30px 23px 30px 23px 30px;
  grid-template-rows: repeat(3, 38px);
  align-items: center;
  padding: 0 5px;
}
.shapes svg {
  display: block;
  width: 30px;
  height: 30px;
}
.rows {
  display: grid;
  grid-template-rows: repeat(3, 38px);
  width: 213px;
  padding: 0 7px;
}
.row {
  display: flex;
  align-items: center;
  gap: 5px;
}
.row svg {
  width: 30px;
  height: 30px;
}
.row i {
  margin-left: auto;
}
.collapse {
  align-self: flex-end;
  margin: 0 15px 9px auto;
}

/* workspace */
.workspace {
  flex: 1;
  display: grid;
  grid-template: 28px 1fr / 273px 1fr;
  border-top: 1px solid #858585;
  border-right: 1px solid #666;
  background:
    linear-gradient(to bottom, rgba(253, 253, 254, 0) 54%, #fdfdfe 74%, #f8f9fb 100%),
    linear-gradient(162deg, #fff 18%, #fafafc 27%, #e6e9f1 40%, #dfe3ed 52%, #dbdee9 68%);
}
.tabs {
  grid-column: 1 / 3;
  justify-self: start;
  display: grid;
  grid-template-columns: 75px 67px 75px 124px 74px 136px 173px 56px 157px 180px;
}
.tabs button {
  background: #333;
  border-right: 1px solid #858585;
  border-bottom: 1px solid #858585;
  font-size: 14px;
  white-space: nowrap;
}
.tabs .current, .panel-tabs .current, .sheet-tabs .current {
  background: #484848;
  border-bottom-color: #484848;
  font-weight: bold;
}

/* property panel */
.panel {
  position: relative;
  background: #484848;
  border-right: 2px solid #7d7d7d;
  font-family: "Noto Sans", sans-serif;
}
.knob {
  display: block;
  width: 7px;
  height: 7px;
  border-radius: 50%;
  background: #ddd;
  border: 1px solid #999;
}
.panel-grip {
  display: flex;
  justify-content: center;
  align-items: center;
  height: 22px;
  margin: 3px 3px 4px 0;
  border: 1px solid #777;
  border-width: 1px 0;
}
.panel-tabs {
  position: relative;
  display: grid;
  grid-template-columns: repeat(5, 52px);
  height: 38px;
  margin-right: 3px;
  padding-left: 2px;
}
.panel-tabs > button {
  display: flex;
  justify-content: center;
  align-items: center;
  background: #333;
  border: 1px solid #7d7d7d;
  border-left: 0;
}
.scroller {
  position: absolute;
  right: 0;
  bottom: 0;
  display: flex;
  gap: 1px;
  border: 1px solid #999;
  background: #999;
}
.scroller button {
  display: flex;
  align-items: center;
  justify-content: center;
  width: 17px;
  height: 18px;
  background: #eee;
}
.scroller button::before {
  content: "";
  border: 4px solid transparent;
  border-left: 0;
  border-right-color: #000;
}
.scroller .right::before {
  transform: rotate(180deg);
}
.feature {
  display: flex;
  align-items: center;
  gap: 8px;
  height: 38px;
  padding: 0 17px 0 14px;
}
.feature h2 {
  flex: 1;
  font-size: 14px;
}
.feature button, .confirm button {
  display: flex;
}
.confirm {
  display: flex;
  gap: 19px;
  height: 37px;
  padding: 7px 10px;
}
.panel section {
  margin: 0 6px 0 5px;
  padding: 5px 0 0 4px;
  border-top: 1px solid #aaa;
}
.panel section header {
  display: flex;
  align-items: center;
  justify-content: space-between;
  height: 22px;
  padding-right: 2px;
}
.caret {
  width: 12px;
  height: 8px;
  fill: none;
  stroke: #fff;
  stroke-width: 2;
}
.axis {
  height: 72px;
}
.dir1 {
  height: 138px;
}
.panel .dir2 {
  height: 36px;
}
.field {
  display: flex;
  align-items: center;
  gap: 7px;
}
.axis .field {
  padding-top: 4px;
}
.glyph {
  display: flex;
  align-items: center;
  justify-content: center;
  width: 30px;
  height: 30px;
}
.boxed {
  border: 1px solid #222;
}
.field input, .field select, .field textarea {
  width: 205px;
  border: 1px solid #999;
  border-radius: 0;
  padding: 0 4px;
  color: #111;
  font: inherit;
}
.field .picked {
  height: 28px;
  padding-bottom: 3px;
  border: 2px solid #58aee4;
  background: #cfe4f9;
  font-size: 12px;
}
.combo {
  position: relative;
  margin-top: 5px;
}
.combo select {
  height: 25px;
  padding: 0 3px;
  appearance: none;
  background: #e1e1e1;
}
.combo::after {
  content: "";
  position: absolute;
  right: 21px;
  top: 9px;
  width: 7px;
  height: 7px;
  border: 1px solid #333;
  border-width: 0 1px 1px 0;
  transform: rotate(45deg);
}
.angle {
  margin-top: 8px;
}
.spin {
  display: flex;
  width: 205px;
  height: 26px;
  padding: 1px;
  background: #fff;
  border: 1px solid #999;
}
.spin input {
  flex: 1;
  min-width: 0;
  border: 0;
  padding: 0 1px;
  font-size: 13px;
}
.spin div {
  display: grid;
  grid-template-rows: 11px 11px;
  width: 21px;
}
.spin button {
  display: flex;
  align-items: center;
  justify-content: center;
  background: #e8e8e8;
  border: 1px solid #aaa;
}
.spin button::before {
  content: "";
  border: 4px solid transparent;
  border-top: 0;
  border-bottom-color: #000;
}
.spin .down::before {
  transform: rotate(180deg);
}
.check {
  display: flex;
  align-items: center;
  gap: 4px;
  font-size: 12px;
}
.check b {
  font-size: 13px;
}
.check input {
  appearance: none;
  width: 15px;
  height: 15px;
  margin: 0;
  background: #fff;
  border: 1px solid #222;
}
.flip {
  margin: 7px 0 0 35px;
  gap: 3px;
}
.contours .field {
  gap: 10px;
  align-items: flex-start;
  padding-top: 4px;
}
.field textarea {
  height: 43px;
  resize: none;
  color: #446;
  font-size: 12px;
  line-height: 23px;
}
.contours .knob {
  margin-left: 138px;
}
.handle {
  position: absolute;
  top: 334px;
  right: -13px;
  width: 12px;
  height: 49px;
  padding-top: 21px;
  padding-left: 1px;
  background: #484848;
  border: 1px solid #7d7d7d;
  border-left: 0;
  z-index: 2;
}

/* graphics area */
.canvas {
  position: relative;
  min-width: 0;
}
.scene {
  position: absolute;
  inset: 0;
  width: 100%;
  height: 100%;
}
.dim-text {
  font-size: 20px;
  font-weight: bold;
  font-style: italic;
}
.axis-text {
  font-family: "Liberation Sans", sans-serif;
  font-size: 13px;
}
.tree-node {
  position: absolute;
  top: 8px;
  left: 6px;
  display: flex;
  align-items: center;
  color: #000;
  font-family: "Noto Sans", sans-serif;
  font-size: 14px;
}
.tree-node button {
  margin-right: 13px;
  border: 4px solid transparent;
  border-left-color: #111;
  border-right: 0;
}
.tree-node svg {
  margin-right: 4px;
}
.hud {
  position: relative;
  display: flex;
  align-items: center;
  width: max-content;
  margin: 6px 0 0 575px;
}
.hud button {
  width: 38px;
  height: 30px;
}
.hud .drop {
  width: 15px;
}
.hud svg {
  display: block;
  width: 28px;
  height: 28px;
  margin: auto;
}
.faint {
  opacity: 0.4;
}
.corner {
  position: absolute;
  top: -20px;
  right: 12px;
  display: flex;
  flex-direction: column;
}
.doc-buttons {
  display: flex;
  gap: 12px;
}
.doc-buttons svg {
  stroke: #999;
}
.accept {
  align-self: flex-start;
  margin: 45px 0 0 25px;
}
.reject {
  align-self: flex-end;
  margin: 2px 48px 0 0;
}
.taskpane {
  position: absolute;
  top: 67px;
  right: -1px;
  width: 49px;
  border: 1px solid #858585;
  border-bottom: 0;
}
.taskpane button {
  display: flex;
  align-items: center;
  justify-content: center;
  width: 100%;
  height: 45px;
  background: #333;
  border-bottom: 1px solid #858585;
}
.taskpane .current {
  background: #b4b4b4;
}
.taskpane svg {
  width: 28px;
  height: 28px;
}

/* sheet tabs and status */
.sheet-tabs {
  display: flex;
  height: 21px;
  border-top: 1px solid #858585;
  border-bottom: 1px solid #858585;
}
.sheet-tabs > button {
  padding: 0 11px;
  background: #333;
  border-right: 1px solid #858585;
  font-size: 15px;
}
.sheet-tabs > .current {
  padding: 0 14px;
}
.sheet-tabs > :last-child {
  width: 144px;
  padding-left: 0;
  padding-right: 12px;
}
.sheet-nav {
  display: flex;
  width: 108px;
  border-right: 1px solid #858585;
}
.sheet-nav i {
  width: 27px;
  background: #b4b4b4;
}
.sheet-nav button {
  width: 20px;
  background: #a9a9bf;
  border: 1px solid #8b8ba3;
}
.sheet-nav svg {
  display: block;
  width: 16px;
  height: 16px;
  margin: auto;
  fill: #85859c;
}
.status {
  display: flex;
  align-items: center;
  height: 21px;
  padding-top: 2px;
  font-size: 14px;
}
.status p {
  flex: 1;
  padding-left: 1px;
}
.x { width: 103px; }
.y { width: 73px; }
.z { width: 56px; }
.state { width: 115px; }
.mode { width: 128px; }
.warn {
  margin-right: 77px;
}
.units {
  width: 62px;
  color: #909090;
}
.up {
  margin-right: 28px;
  transform: rotate(180deg);
}

/* windows taskbar */
.taskbar {
  display: flex;
  height: 50px;
  background: #1d1d1d;
}
.taskbar > button {
  display: flex;
  align-items: center;
  justify-content: center;
  width: 62px;
}
.taskbar > .start {
  width: 60px;
  margin-right: 3px;
}
.taskbar > button:not(.start) svg {
  width: 30px;
  height: 30px;
}
.run {
  background: linear-gradient(#5b93c4, #5b93c4) center bottom / 51px 3px no-repeat;
}
.focus {
  background: linear-gradient(#5b93c4, #5b93c4) center bottom / 100% 3px no-repeat #464646;
}
.tray {
  display: flex;
  align-items: center;
  margin-left: auto;
  padding-right: 25px;
}
.tray button {
  min-width: 31px;
}
.tray svg {
  display: block;
  width: 24px;
  height: 24px;
  margin: auto;
  fill: none;
  stroke: #fff;
}
.tray .lang {
  width: 43px;
}
.tray .clock {
  width: 89px;
  margin-right: 5px;
  font-size: 14px;
  line-height: 23px;
}
.tray .notes {
  width: 32px;
}
```
